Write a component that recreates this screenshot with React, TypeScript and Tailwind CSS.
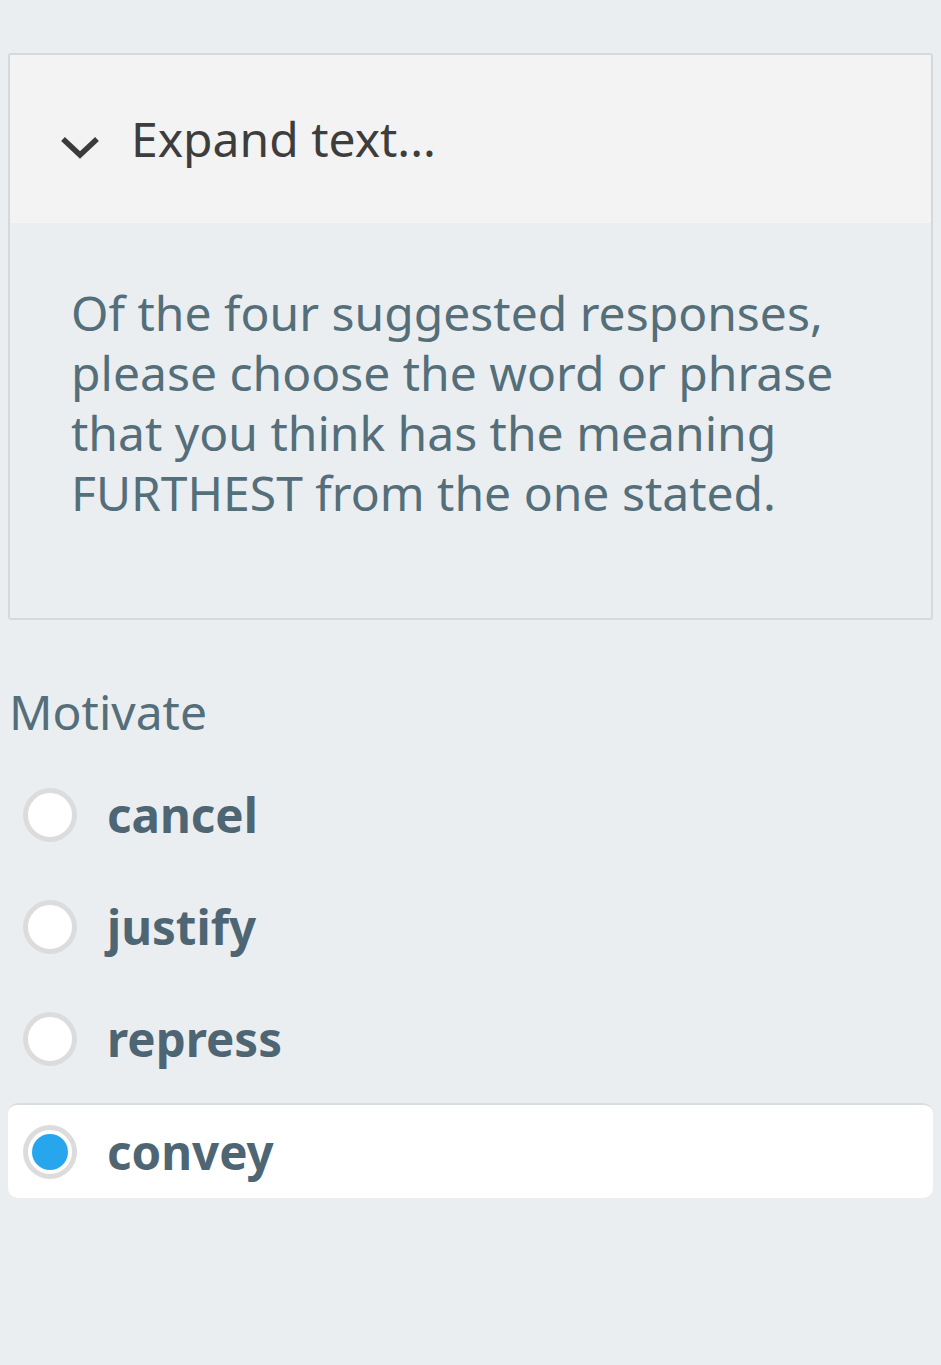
import React from "react";

const options = ["cancel", "justify", "repress", "convey"];

function Radio({ checked }: { checked: boolean }) {
  return (
    <div className="w-[54px] h-[54px] rounded-full border-[5px] border-[#dcdcdc] bg-white flex items-center justify-center shrink-0">
      {checked && <div className="w-[36px] h-[36px] rounded-full bg-[#27a6ee]" />}
    </div>
  );
}

export default function App() {
  return (
    <div className="min-h-[1365px] w-[941px] bg-[#ebeef1] pt-[53px] px-[8px]" style={{ fontFamily: '"Noto Sans", "Open Sans", sans-serif' }}>
      <div className="border-2 border-[#d6d9dc] rounded-[3px] overflow-hidden">
        <div className="bg-[#f3f3f3] h-[168px] flex items-center pl-[48px]">
          <svg width="44" height="30" viewBox="0 0 44 30" className="mt-[14px]">
            <path d="M5 8 L22 24 L39 8" fill="none" stroke="#3b3b3b" strokeWidth="5.5" />
          </svg>
          <span className="ml-[29px] text-[48px] leading-none text-[#3d3d3d]">Expand text...</span>
        </div>
        <div className="pl-[61px] pr-[40px] pt-[60px] pb-[95px] text-[48px] leading-[60px] text-[#546e7a]">
          Of the four suggested responses, please choose the word or phrase that you think has the meaning FURTHEST from the one stated.
        </div>
      </div>
      <div className="mt-[62px] text-[48px] leading-[60px] text-[#546e7a] pl-[1px]">Motivate</div>
      <div className="mt-[25px] flex flex-col gap-[17px]">
        {options.map((o) => {
          const sel = o === "convey";
          return (
            <div
              key={o}
              className={
                "h-[95px] flex items-center pl-[15px] rounded-[10px] " +
                (sel ? "bg-white border-t-2 border-[#d8dde0]" : "")
              }
            >
              <Radio checked={sel} />
              <span className="ml-[30px] text-[47.5px] font-bold text-[#4e6573]">{o}</span>
            </div>
          );
        })}
      </div>
    </div>
  );
}
